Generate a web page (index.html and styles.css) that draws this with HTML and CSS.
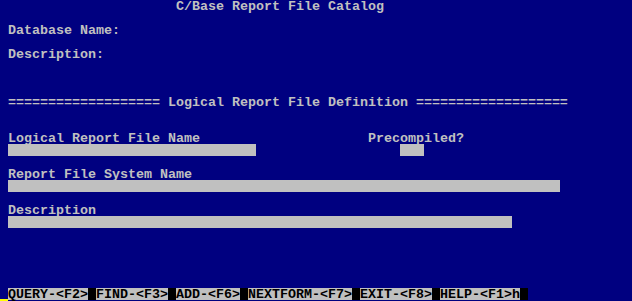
FILE: index.html
```html
<!DOCTYPE html>
<html>
<head>
<meta charset="utf-8">
<link rel="stylesheet" href="styles.css">
<title>C/Base Report File Catalog</title>
</head>
<body>
<div class="screen">
  <div class="row"><span class="c22">C/Base Report File Catalog</span></div>
  <div class="row"></div>
  <div class="row"><span class="c1">Database Name:</span></div>
  <div class="row"></div>
  <div class="row"><span class="c1">Description:</span></div>
  <div class="row"></div>
  <div class="row"></div>
  <div class="row"></div>
  <div class="row"><span class="c1">=================== Logical Report File Definition ===================</span></div>
  <div class="row"></div>
  <div class="row"></div>
  <div class="row"><span class="c1 w45">Logical Report File Name</span><span>Precompiled?</span></div>
  <div class="row"><span class="c1 field w31"></span><span class="field w3 c50"></span></div>
  <div class="row"></div>
  <div class="row"><span class="c1">Report File System Name</span></div>
  <div class="row"><span class="c1 field w69"></span></div>
  <div class="row"></div>
  <div class="row"><span class="c1">Description</span></div>
  <div class="row"><span class="c1 field w63"></span></div>
  <div class="row"></div>
  <div class="row"></div>
  <div class="row"></div>
  <div class="row"></div>
  <div class="row"></div>
  <div class="row status">
    <span class="cursor"></span><span class="key">QUERY-&lt;F2&gt;</span><span class="sep"></span><span class="key">FIND-&lt;F3&gt;</span><span class="sep"></span><span class="key">ADD-&lt;F6&gt;</span><span class="sep"></span><span class="key">NEXTFORM-&lt;F7&gt;</span><span class="sep"></span><span class="key">EXIT-&lt;F8&gt;</span><span class="sep"></span><span class="key">HELP-&lt;F1&gt;h</span><span class="sep"></span>
  </div>
</div>
</body>
</html>
```
FILE: styles.css
```css
html, body {
  margin: 0;
  padding: 0;
  background: #000080;
}
.screen {
  width: 632px;
  height: 301px;
  overflow: hidden;
  background: #000080;
  color: #c0c0c0;
  font-family: "Liberation Mono", "DejaVu Sans Mono", monospace;
  font-weight: bold;
  font-size: 13.3333px;
  line-height: 12px;
  display: flex;
  flex-direction: column;
}
.row {
  height: 12px;
  display: flex;
  white-space: pre;
  flex: none;
}
.row span {
  display: block;
  box-sizing: border-box;
  height: 12px;
  padding-top: 1px;
  line-height: 11px;
}
.c1 { margin-left: 8px; }
.c22 { margin-left: 176px; }
.w45 { width: 360px; }
.c50 { margin-left: 144px; }
.field { background: #c0c0c0; }
.w31 { width: 248px; }
.w3 { width: 24px; }
.w69 { width: 552px; }
.w63 { width: 504px; }
.status .cursor {
  width: 8px;
  border-bottom: 2px solid #ffff00;
  height: 13px;
}
.status .key {
  background: #c0c0c0;
  color: #000000;
}
.status .sep {
  width: 8px;
  background: #000000;
}
```
